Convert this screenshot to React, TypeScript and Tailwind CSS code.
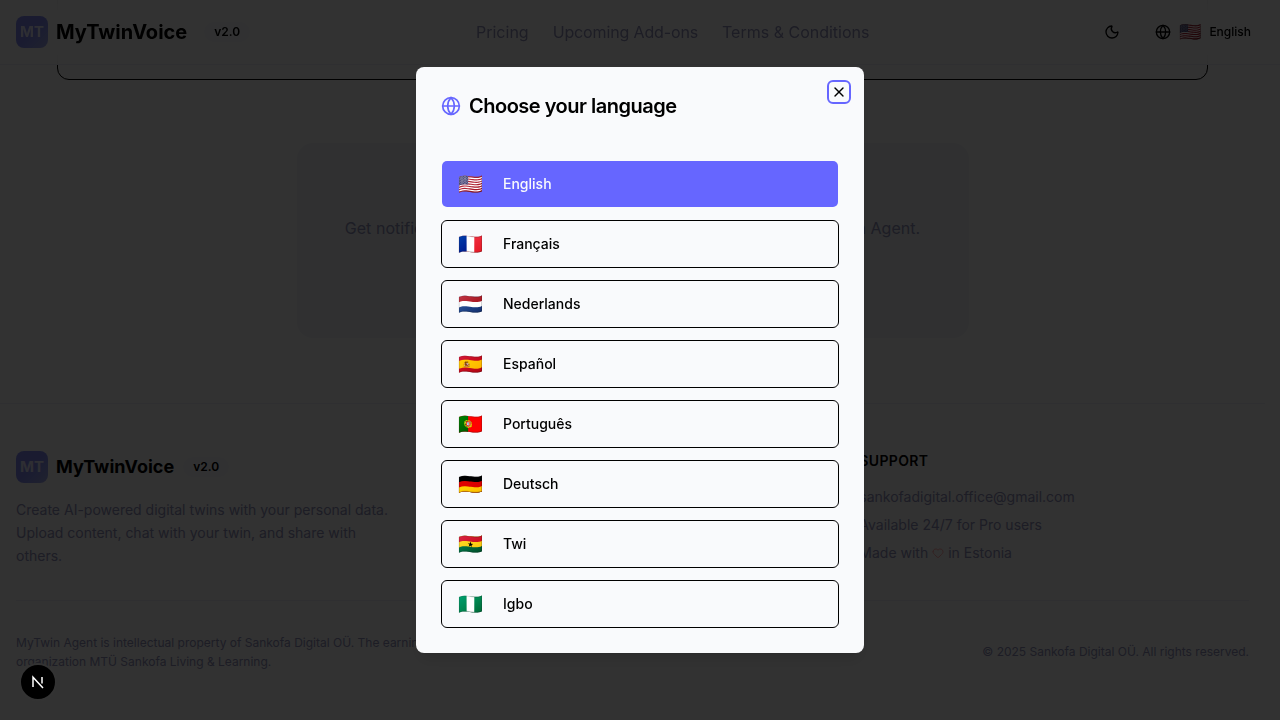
import React from "react";
import { Globe, Heart, Moon, X } from "lucide-react";

const languages = [
  { flag: "🇺🇸", name: "English" },
  { flag: "🇫🇷", name: "Français" },
  { flag: "🇳🇱", name: "Nederlands" },
  { flag: "🇪🇸", name: "Español" },
  { flag: "🇵🇹", name: "Português" },
  { flag: "🇩🇪", name: "Deutsch" },
  { flag: "🇬🇭", name: "Twi" },
  { flag: "🇳🇬", name: "Igbo" },
];

const Logo: React.FC = () => (
  <div className="w-8 h-8 rounded-lg bg-gradient-to-br from-[#8088f0] via-[#8088f0] to-[#a0a8e8] flex items-center justify-center text-white/80 font-bold text-[15px] shrink-0">
    MT
  </div>
);

const App: React.FC = () => {
  return (
    <div className="relative h-[720px] w-[1280px] overflow-hidden bg-[#fafafa] font-['Inter',sans-serif] text-black">
      {/* Header */}
      <header className="absolute top-0 left-0 z-10 w-full h-[65px] border-b border-[#ececf2] bg-[#fafafa]/90 backdrop-blur-sm flex items-center justify-between pl-4 pr-[29px]">
        <div className="flex items-center">
          <Logo />
          <span className="ml-2 text-xl font-bold">MyTwinVoice</span>
          <span className="ml-[17px] px-2.5 py-0.5 rounded-full bg-[#f4f5f8] text-xs font-semibold">v2.0</span>
        </div>
        <nav className="absolute left-[476px] flex items-center gap-6 text-base text-[#9090b8]">
          <span>Pricing</span>
          <span className="tracking-[-0.14px]">Upcoming Add-ons</span>
          <span>Terms &amp; Conditions</span>
        </nav>
        <div className="flex items-center">
          <Moon className="h-4 w-4 mr-[35px]" />
          <Globe className="h-4 w-4" />
          <span className="ml-2 text-lg leading-none">🇺🇸</span>
          <span className="ml-2 text-xs font-medium">English</span>
        </div>
      </header>

      <main className="w-[1265px]">
        <div className="mx-[57px] -mt-5 h-[100px] rounded-xl border border-black" />
        <section className="mt-[63px] mx-auto w-[672px] h-[195px] rounded-2xl bg-[#eef0f4] flex flex-col items-center justify-center">
          <p className="text-base tracking-[0.03px] text-[#9090b8] -mt-[26px] whitespace-nowrap">
            Get notified when new add-ons and features launch for your MyTwin Agent.
          </p>
        </section>

        {/* Footer */}
        <footer className="mt-[65px] border-t border-[#ececf2] px-4 pt-[47px]">
          <div className="grid grid-cols-3 gap-8">
            <div>
              <div className="flex items-center">
                <Logo />
                <span className="ml-2 text-lg font-bold">MyTwinVoice</span>
                <span className="ml-[9px] px-2.5 py-0.5 rounded-full bg-[#f4f5f8] text-xs font-semibold">v2.0</span>
              </div>
              <p className="mt-[15px] max-w-[384px] text-sm leading-[23px] text-[#9090b8]">
                Create AI-powered digital twins with your personal data. Upload content, chat with your twin, and share with others.
              </p>
            </div>
            <div />
            <div>
              <h4 className="text-sm font-semibold uppercase tracking-wide">Support</h4>
              <ul className="mt-4 space-y-2 text-sm text-[#9090b8]">
                <li>sankofadigital.office@gmail.com</li>
                <li>Available 24/7 for Pro users</li>
                <li className="flex items-center gap-1">
                  Made with <Heart className="h-3 w-3 text-red-300" /> in Estonia
                </li>
              </ul>
            </div>
          </div>
          <div className="mt-[33px] border-t border-[#ececf2] pt-8 flex items-center justify-between text-xs text-[#9090b8]">
            <p className="leading-[19px]">
              MyTwin Agent is intellectual property of Sankofa Digital OÜ. The earnings of this platform support the nonprofit
              <br />
              organization MTÜ Sankofa Living &amp; Learning.
            </p>
            <p className="whitespace-nowrap">© 2025 Sankofa Digital OÜ. All rights reserved.</p>
          </div>
        </footer>
      </main>

      {/* Overlay + dialog */}
      <div className="absolute inset-0 z-20 bg-black/80" />
      <div className="absolute left-[416px] top-[67px] z-30 w-[448px] h-[586px] rounded-lg bg-[#f9fafc] p-[25px] shadow-lg">
        <div className="flex items-center gap-2 h-[30px] mt-[-1px]">
          <Globe className="h-5 w-5 text-[#6666ff]" />
          <h2 className="text-xl font-semibold tracking-tight">Choose your language</h2>
        </div>
        <button className="absolute right-[13px] top-[13px] w-6 h-6 rounded-md border-2 border-[#6666ff] flex items-center justify-center">
          <X className="h-4 w-4" />
        </button>
        <ul className="mt-[39px] flex flex-col gap-3">
          {languages.map((lang, index) => (
            <li
              key={lang.name}
              className={
                index === 0
                  ? "h-12 rounded-md border border-transparent bg-clip-padding bg-[#6666ff] text-[#f9fafc] flex items-center pl-4 text-sm font-medium"
                  : "h-12 rounded-md border border-black flex items-center pl-4 text-sm font-medium"
              }
            >
              <span className="w-[45px] text-xl leading-none">{lang.flag}</span>
              {lang.name}
            </li>
          ))}
        </ul>
      </div>

      {/* Next.js dev badge, sits above the overlay */}
      <div className="absolute left-[19px] top-[663px] z-40 w-[38px] h-[38px] rounded-full bg-black border-2 border-[#333333] flex items-center justify-center">
        <svg viewBox="0 0 16 16" className="w-4 h-4" fill="none" stroke="white" strokeWidth="1.5">
          <path d="M3 13V3.2L13 14" />
          <path d="M12 3v6.5" />
        </svg>
      </div>
    </div>
  );
};

export default App;
